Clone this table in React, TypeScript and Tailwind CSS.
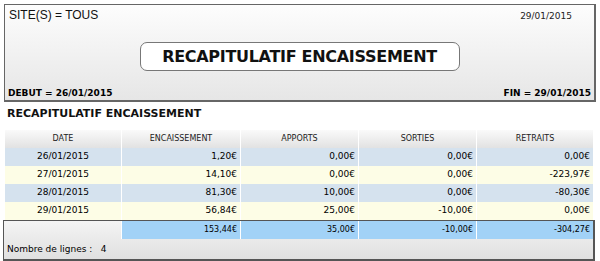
import React from 'react'

const rows = [
  { date: '26/01/2015', enc: '1,20€', app: '0,00€', sor: '0,00€', ret: '0,00€' },
  { date: '27/01/2015', enc: '14,10€', app: '0,00€', sor: '0,00€', ret: '-223,97€' },
  { date: '28/01/2015', enc: '81,30€', app: '10,00€', sor: '0,00€', ret: '-80,30€' },
  { date: '29/01/2015', enc: '56,84€', app: '25,00€', sor: '-10,00€', ret: '0,00€' }
]

const cols = ['DATE', 'ENCAISSEMENT', 'APPORTS', 'SORTIES', 'RETRAITS']

export default function App() {
  return (
    <div className="w-[600px] h-[261px] bg-white overflow-hidden relative font-['DejaVu_Sans',sans-serif] text-black">
      {/* report header */}
      <div className="mx-[4px] mt-[4px] h-[98px] border border-[#666] border-r-2 border-b-2 bg-gradient-to-b from-[#fdfdfd] to-[#e6e6e6] flex flex-col">
        <div className="flex justify-between items-start pl-[4px] pr-[22px] pt-[3px]">
          <span className="font-['Liberation_Sans',sans-serif] text-[12px] leading-[14px] text-[#111]">SITE(S) = TOUS</span>
          <span className="text-[9px] leading-[12px] mt-[2px] text-[#222]">29/01/2015</span>
        </div>
        <div className="flex justify-center mt-[20px]">
          <div className="w-[320px] h-[29px] bg-white border border-[#777] rounded-[7px] flex items-center justify-center font-bold text-[16px] tracking-[-0.3px] text-[#111]">
            RECAPITULATIF ENCAISSEMENT
          </div>
        </div>
        <div className="flex justify-between items-end mt-auto px-[3px] pb-[1px] text-[9px] font-bold leading-[12px]">
          <span>DEBUT = 26/01/2015</span>
          <span>FIN = 29/01/2015</span>
        </div>
      </div>

      <div className="pl-[7px] pt-[5px] text-[11px] font-bold leading-[14px] text-[#111]">
        RECAPITULATIF ENCAISSEMENT
      </div>

      {/* table */}
      <div className="ml-[5px] mt-[9px] w-[588px]">
        <div className="grid grid-cols-[116px_119px_118px_118px_117px] h-[18px] bg-gradient-to-b from-[#fafafa] to-[#e2e2e2] text-[#222]">
          {cols.map((c, i) => (
            <div
              key={c}
              className={`flex items-center justify-center text-[8px] ${i > 0 ? 'border-l border-white' : ''}`}
            >
              {c}
            </div>
          ))}
        </div>
        {rows.map((r, idx) => (
          <div
            key={r.date}
            className={`grid grid-cols-[116px_119px_118px_118px_117px] h-[18px] text-[9px] ${idx % 2 === 0 ? 'bg-[#d5e2ee]' : 'bg-[#fdfde6]'}`}
          >
            <div className="flex items-center justify-center">{r.date}</div>
            <div className="flex items-center justify-end pr-[3px] border-l border-white">{r.enc}</div>
            <div className="flex items-center justify-end pr-[3px] border-l border-white">{r.app}</div>
            <div className="flex items-center justify-end pr-[3px] border-l border-white">{r.sor}</div>
            <div className="flex items-center justify-end pr-[3px] border-l border-white">{r.ret}</div>
          </div>
        ))}
      </div>

      {/* footer with totals */}
      <div className="ml-[3px] w-[592px] h-[41px] border border-[#555] border-r-2 border-b-2 bg-gradient-to-b from-[#f4f4f4] to-[#e0e0e0] flex flex-col">
        <div className="grid grid-cols-[117px_119px_118px_118px_117px] h-[18px] text-[8px]">
          <div />
          <div className="flex items-center justify-end pr-[3px] bg-[#a2d2f7] border-l border-white">153,44€</div>
          <div className="flex items-center justify-end pr-[3px] bg-[#a2d2f7] border-l border-white">35,00€</div>
          <div className="flex items-center justify-end pr-[3px] bg-[#a2d2f7] border-l border-white">-10,00€</div>
          <div className="flex items-center justify-end pr-[3px] bg-[#a2d2f7] border-l border-white">-304,27€</div>
        </div>
        <div className="pl-[3px] pt-[4px] text-[9px] leading-[12px]">
          Nombre de lignes :&nbsp;&nbsp; 4
        </div>
      </div>
    </div>
  )
}
